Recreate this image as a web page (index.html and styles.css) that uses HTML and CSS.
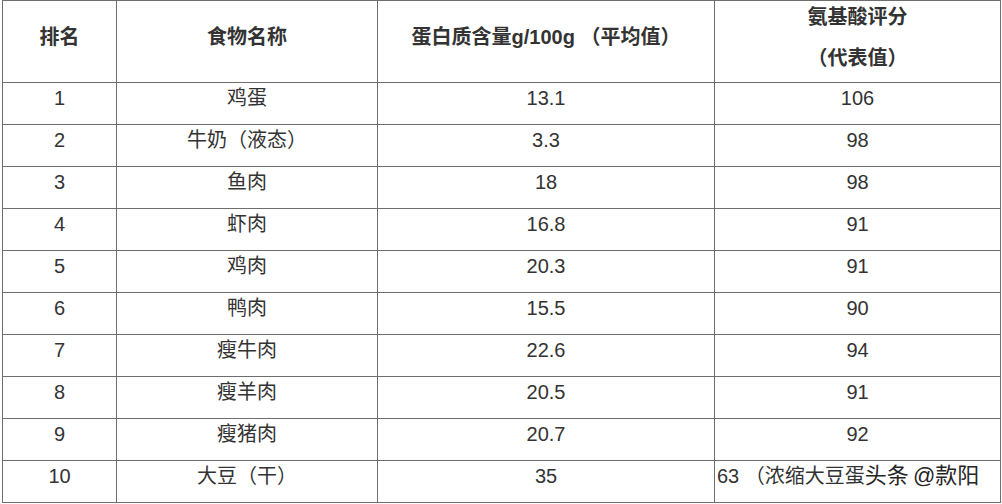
FILE: index.html
```html
<!DOCTYPE html>
<html lang="zh">
<head>
<meta charset="utf-8">
<title>蛋白质含量</title>
<link rel="stylesheet" href="styles.css">
</head>
<body>
<table class="tbl">
  <colgroup>
    <col class="c1"><col class="c2"><col class="c3"><col class="c4">
  </colgroup>
  <thead>
    <tr class="head">
      <th>排名</th>
      <th>食物名称</th>
      <th>蛋白质含量g/100g （平均值）</th>
      <th class="two"><div>氨基酸评分</div><div class="second">（代表值）</div></th>
    </tr>
  </thead>
  <tbody>
    <tr><td>1</td><td>鸡蛋</td><td>13.1</td><td>106</td></tr>
    <tr><td>2</td><td>牛奶（液态）</td><td>3.3</td><td>98</td></tr>
    <tr><td>3</td><td>鱼肉</td><td>18</td><td>98</td></tr>
    <tr><td>4</td><td>虾肉</td><td>16.8</td><td>91</td></tr>
    <tr><td>5</td><td>鸡肉</td><td>20.3</td><td>91</td></tr>
    <tr><td>6</td><td>鸭肉</td><td>15.5</td><td>90</td></tr>
    <tr><td>7</td><td>瘦牛肉</td><td>22.6</td><td>94</td></tr>
    <tr><td>8</td><td>瘦羊肉</td><td>20.5</td><td>91</td></tr>
    <tr><td>9</td><td>瘦猪肉</td><td>20.7</td><td>92</td></tr>
    <tr><td>10</td><td>大豆（干）</td><td>35</td>
      <td class="last"><div class="lastrow"><span class="base">63 （浓缩大豆蛋</span><span class="mark">头条 @款阳</span></div></td></tr>
  </tbody>
</table>
</body>
</html>
```
FILE: styles.css
```css
html, body {
  margin: 0;
  padding: 0;
  background: #ffffff;
}
body {
  font-family: "Liberation Sans", "Noto Sans CJK SC", sans-serif;
  color: #333333;
}
.tbl {
  margin-left: 2px;
  border-collapse: collapse;
  table-layout: fixed;
  width: 999px;
  font-size: 20px;
}
.c1 { width: 114px; }
.c2 { width: 261px; }
.c3 { width: 337px; }
.c4 { width: 286px; }
.tbl th, .tbl td {
  border: 1px solid #6e6e6e;
  text-align: center;
  vertical-align: top;
  padding: 0;
}
.head th {
  height: 61px;
  padding-top: 20px;
  line-height: 32px;
  font-weight: bold;
  color: #333333;
}
.head th.two {
  padding-top: 0;
  height: 81px;
}
.two .second {
  margin-top: 9px;
}
.tbl td {
  height: 41px;
  line-height: 30px;
}
.tbl td.last {
  text-align: left;
  padding-left: 2px;
}
.lastrow {
  display: flex;
  white-space: nowrap;
  height: 41px;
}
.base {
  flex: 0 0 auto;
}
.mark {
  flex: 0 0 auto;
  font-size: 22px;
  color: #262626;
  word-spacing: -2px;
  text-shadow: 0 0 2px #fff;
}
```
